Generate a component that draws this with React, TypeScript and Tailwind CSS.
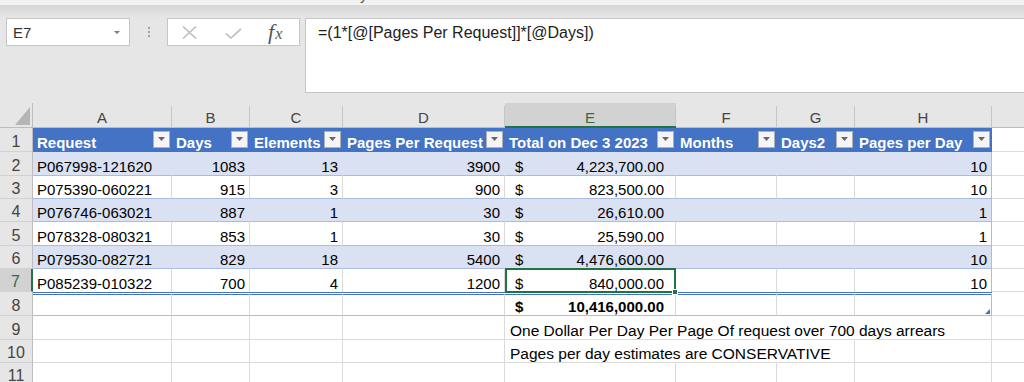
import React from "react";

const GRID =
  "grid grid-cols-[33px_139px_78px_93px_162px_171px_101px_78px_137px_32px]";

const DATA: string[][] = [
  ["P067998-121620", "1083", "13", "3900", "4,223,700.00", "10"],
  ["P075390-060221", "915", "3", "900", "823,500.00", "10"],
  ["P076746-063021", "887", "1", "30", "26,610.00", "1"],
  ["P078328-080321", "853", "1", "30", "25,590.00", "1"],
  ["P079530-082721", "829", "18", "5400", "4,476,600.00", "10"],
  ["P085239-010322", "700", "4", "1200", "840,000.00", "10"],
];

const ROW_H = ["h-[24px]", "h-[23px]", "h-[23px]", "h-[24px]", "h-[23px]", "h-[23px]"];

function RowHead({ n, selected = false }: { n: number; selected?: boolean }) {
  return selected ? (
    <div className="bg-[#d2d2d2] border-r-2 border-r-[#217346] border-b border-b-[#d1d1d1] flex items-end justify-center pb-[1px] text-[16px] leading-none text-[#2e6b47]">
      {n}
    </div>
  ) : (
    <div className="bg-[#e6e6e6] border-r border-r-[#bdbdbd] border-b border-b-[#d1d1d1] flex items-end justify-center pb-[1px] text-[16px] leading-none text-[#444]">
      {n}
    </div>
  );
}

function FilterBtn() {
  return (
    <div className="self-center shrink-0 w-[17px] h-[17px] bg-[#f5f5f5] border border-[#b0b0b0] flex items-center justify-center">
      <svg width="7" height="4" viewBox="0 0 7 4">
        <path d="M0 0H7L3.5 4Z" fill="#666666" />
      </svg>
    </div>
  );
}

function HeadCell({ label }: { label: string }) {
  return (
    <div className="flex items-end justify-between pl-[4px] pr-[2px] pb-[2px] bg-[#4472c4] text-white font-bold text-[15px] leading-none whitespace-nowrap min-w-0">
      <span>{label}</span>
      <FilterBtn />
    </div>
  );
}

function FormulaBar() {
  return (
    <div className="h-[86px] bg-[#e6e6e6] pt-[1px] flex items-start">
      <div className="ml-[6px] w-[124px] h-[28px] bg-white border border-[#c6c6c6] flex items-center justify-between pl-[6px] pr-[9px]">
        <span className="text-[15px] leading-none text-[#333]">E7</span>
        <svg width="6" height="3" viewBox="0 0 6 3">
          <path d="M0 0H6L3 3Z" fill="#7a7a7a" />
        </svg>
      </div>
      <div className="w-[37px] h-[28px] flex flex-col items-center justify-center gap-[2px]">
        <div className="w-[2px] h-[2px] bg-[#a0a0a0]" />
        <div className="w-[2px] h-[2px] bg-[#a0a0a0]" />
        <div className="w-[2px] h-[2px] bg-[#a0a0a0]" />
      </div>
      <div className="w-[133px] h-[28px] bg-white border border-[#c6c6c6] flex items-center pl-[14px]">
        <svg width="15" height="13" viewBox="0 0 15 13">
          <path d="M1 0.5L14 12.5M14 0.5L1 12.5" stroke="#b8b8b8" strokeWidth="1.4" fill="none" />
        </svg>
        <svg className="ml-[28px] mt-[3px]" width="17" height="11" viewBox="0 0 17 11">
          <path d="M1 5.5L6 10L16 0.8" stroke="#bcbcbc" strokeWidth="1.6" fill="none" />
        </svg>
        <span className="ml-[26px] font-['Liberation_Serif',serif] italic text-[#555] leading-none">
          <span className="text-[22px]">f</span>
          <span className="text-[16px] ml-[1px]">x</span>
        </span>
      </div>
      <div className="ml-[5px] flex-1 h-[75px] bg-white border-l border-t border-b border-[#c6c6c6] pl-[12px] pt-[6px] text-[16px] leading-none text-[#222]">
        =(1*[@[Pages Per Request]]*[@Days])
      </div>
    </div>
  );
}

function ColumnHeaders() {
  const letters = ["A", "B", "C", "D", "E", "F", "G", "H"];
  return (
    <div className={`${GRID} h-[25px] bg-[#e6e6e6]`}>
      <div className="border-r border-b border-[#bdbdbd] flex items-end justify-end pr-[2px] pb-[2px]">
        <svg width="15" height="18" viewBox="0 0 15 18">
          <path d="M15 0V18H0Z" fill="#b5b5b5" />
        </svg>
      </div>
      {letters.map((l) =>
        l === "E" ? (
          <div key={l} className="flex flex-col bg-[#d2d2d2] border-b-2 border-[#217346]">
            <div className="mt-[3px] flex-1 border-r border-[#c6c6c6] flex items-end justify-center pb-[1px] text-[15px] leading-none text-[#2e6b47]">
              {l}
            </div>
          </div>
        ) : (
          <div key={l} className="flex flex-col border-b border-[#bdbdbd]">
            <div className="mt-[3px] flex-1 border-r border-[#c6c6c6] flex items-end justify-center pb-[2px] text-[15px] leading-none text-[#444]">
              {l}
            </div>
          </div>
        )
      )}
      <div className="border-b border-[#bdbdbd]" />
    </div>
  );
}

function DataRow({ i }: { i: number }) {
  const d = DATA[i];
  const banded = i % 2 === 0;
  const last = i === 5;
  const bb = last ? "border-b-0" : "border-b border-b-[#a9bde3]";
  const bg = banded ? "bg-[#d9e1f2]" : "bg-white";
  const brIn = banded ? "border-r-[#d9e1f2]" : "border-r-[#dadada]";
  const base = `flex items-end pb-[1px] leading-none text-[15px] whitespace-nowrap min-w-0 border-r ${bb} ${bg}`;
  return (
    <div className={`${GRID} ${ROW_H[i]}`}>
      <RowHead n={i + 2} selected={last} />
      <div className={`${base} ${brIn} pl-[4px]`}>{d[0]}</div>
      <div className={`${base} ${brIn} justify-end pr-[4px]`}>{d[1]}</div>
      <div className={`${base} ${brIn} justify-end pr-[4px]`}>{d[2]}</div>
      <div className={`${base} ${brIn} justify-end pr-[4px]`}>{d[3]}</div>
      <div className={`${base} ${brIn} justify-between pl-[10px] pr-[11px] ${last ? "relative" : ""}`}>
        <span>$</span>
        <span>{d[4]}</span>
        {last && (
          <>
            <div className="absolute -top-px left-0 -right-px -bottom-px border-2 border-[#217346]" />
            <div className="absolute -right-[3px] -bottom-[3px] w-[6px] h-[6px] bg-[#217346] border border-white" />
          </>
        )}
      </div>
      <div className={`${base} ${brIn}`} />
      <div className={`${base} ${brIn}`} />
      <div className={`${base} border-r-[#a9bde3] justify-end pr-[4px]`}>{d[5]}</div>
      <div className="border-b border-b-[#dadada]" />
    </div>
  );
}

function TotalRow() {
  const base =
    "border-t-[3px] border-double border-t-[#4472c4] border-b border-b-[#a9bde3] border-r min-w-0";
  return (
    <div className={`${GRID} h-[24px]`}>
      <RowHead n={8} />
      <div className={`${base} border-r-[#dadada]`} />
      <div className={`${base} border-r-[#dadada]`} />
      <div className={`${base} border-r-[#dadada]`} />
      <div className={`${base} border-r-[#dadada]`} />
      <div className={`${base} border-r-[#dadada] flex items-end justify-between pl-[10px] pr-[11px] pb-[1px] font-bold text-[15px] leading-none`}>
        <span>$</span>
        <span>10,416,000.00</span>
      </div>
      <div className={`${base} border-r-[#dadada]`} />
      <div className={`${base} border-r-[#dadada]`} />
      <div className={`${base} border-r-[#a9bde3] relative`}>
        <svg className="absolute right-[1px] bottom-[1px]" width="5" height="5" viewBox="0 0 5 5">
          <path d="M5 0V5H0Z" fill="#4472c4" />
        </svg>
      </div>
      <div className="border-b border-b-[#dadada]" />
    </div>
  );
}

function NoteRow({
  n,
  text,
  span,
  h,
}: {
  n: number;
  text?: string;
  span: number;
  h: string;
}) {
  const g = "border-r border-b border-[#dadada] min-w-0";
  const t = "border-r border-r-transparent border-b border-b-[#dadada] min-w-0";
  const cells = [0, 1, 2, 3, 4, 5, 6, 7];
  return (
    <div className={`${GRID} ${h}`}>
      <RowHead n={n} />
      {cells.map((c) => {
        const hidden = text && c >= 4 && c < 4 + span - 1;
        if (c === 4 && text) {
          return (
            <div
              key={c}
              className={`${hidden ? t : g} flex items-end pl-[5px] pb-[1px] text-[15.5px] leading-none whitespace-nowrap overflow-visible`}
            >
              {text}
            </div>
          );
        }
        return <div key={c} className={hidden ? t : g} />;
      })}
      <div className="border-b border-b-[#dadada]" />
    </div>
  );
}

export default function App() {
  return (
    <div className="w-[1024px] h-[382px] overflow-hidden bg-white font-['Liberation_Sans',Arial,sans-serif] text-black">
      <div className="h-[5px] bg-[#f3f2f1] overflow-hidden pl-[360px]">
        <div className="-mt-[13px] text-[15px] leading-none text-[#555]">y</div>
      </div>
      <div className="h-[12px] bg-linear-to-b from-[#d8d8d8] to-[#e4e4e4]" />
      <FormulaBar />
      <ColumnHeaders />
      <div className={`${GRID} h-[24px]`}>
        <RowHead n={1} />
        <HeadCell label="Request" />
        <HeadCell label="Days" />
        <HeadCell label="Elements" />
        <HeadCell label="Pages Per Request" />
        <HeadCell label="Total on Dec 3 2023" />
        <HeadCell label="Months" />
        <HeadCell label="Days2" />
        <HeadCell label="Pages per Day" />
        <div className="border-b border-b-[#dadada]" />
      </div>
      {DATA.map((_, i) => (
        <DataRow key={i} i={i} />
      ))}
      <TotalRow />
      <NoteRow
        n={9}
        h="h-[24px]"
        span={4}
        text="One Dollar Per Day Per Page Of request over 700 days arrears"
      />
      <NoteRow
        n={10}
        h="h-[23px]"
        span={3}
        text="Pages per day estimates are CONSERVATIVE"
      />
      <NoteRow n={11} h="h-[23px]" span={0} />
    </div>
  );
}
